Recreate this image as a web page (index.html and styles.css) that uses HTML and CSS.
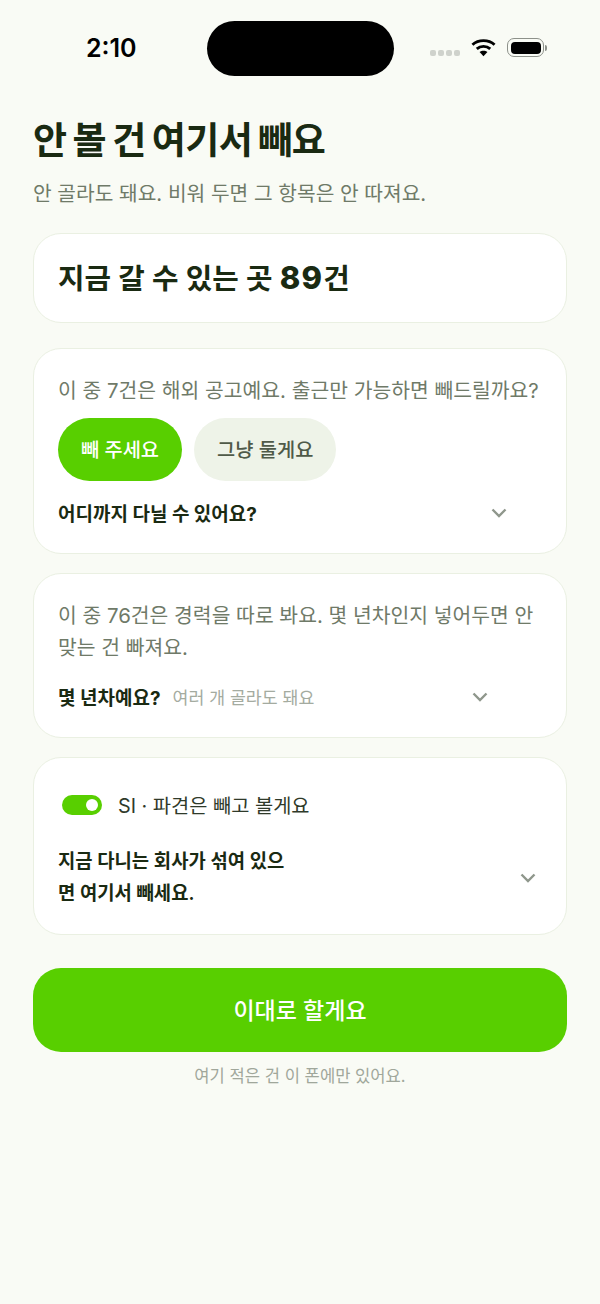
FILE: index.html
```html
<!DOCTYPE html>
<html lang="ko">
<head>
    <meta charset="UTF-8" />
    <meta name="viewport" content="width=device-width, initial-scale=1.0" />
    <title>안 볼 건 여기서 빼요</title>
    <link rel="stylesheet" href="styles.css">
</head>
<body>
    <div class="status-bar">
        <span class="clock">2:10</span>
        <div class="island"></div>
        <div class="status-icons">
            <div class="signal"><i></i><i></i><i></i><i></i></div>
            <svg class="wifi" width="25" height="19" viewBox="0 0 26 19">
                <path d="M1.5 6.6C7.8 .9 18.2 .9 24.5 6.6" fill="none" stroke="#000" stroke-width="3"/>
                <path d="M6 11C10 7.4 16 7.4 20 11" fill="none" stroke="#000" stroke-width="3"/>
                <path d="M13 18.5L8.9 14.3C11.2 12.4 14.8 12.4 17.1 14.3Z" fill="#000"/>
            </svg>
            <div class="battery"><div class="battery-level"></div></div>
            <div class="battery-cap"></div>
        </div>
    </div>

    <main class="page">
        <h1>안 볼 건 여기서 빼요</h1>
        <p class="subtitle">안 골라도 돼요. 비워 두면 그 항목은 안 따져요.</p>

        <section class="card count-card">지금 갈 수 있는 곳 <b>89</b>건</section>

        <section class="card abroad-card">
            <p class="question">이 중 7건은 해외 공고예요. 출근만 가능하면 빼드릴까요?</p>
            <div class="choices">
                <button class="choice choice-on">빼 주세요</button>
                <button class="choice">그냥 둘게요</button>
            </div>
            <div class="select-row abroad-select">
                <span class="select-label">어디까지 다닐 수 있어요?</span>
                <svg class="chevron" width="16" height="10" viewBox="0 0 16 10"><path d="M1.5 1.5L8 8L14.5 1.5" fill="none" stroke="#8f978c" stroke-width="2.4"/></svg>
            </div>
        </section>

        <section class="card career-card">
            <p class="question tall">이 중 76건은 경력을 따로 봐요. 몇 년차인지 넣어두면 안 맞는 건 빠져요.</p>
            <div class="select-row career-select">
                <span class="select-label">몇 년차예요?</span>
                <span class="select-hint">여러 개 골라도 돼요</span>
                <svg class="chevron" width="16" height="10" viewBox="0 0 16 10"><path d="M1.5 1.5L8 8L14.5 1.5" fill="none" stroke="#8f978c" stroke-width="2.4"/></svg>
            </div>
        </section>

        <section class="card company-card">
            <div class="toggle-row">
                <div class="toggle"><div class="knob"></div></div>
                <span>SI · 파견은 빼고 볼게요</span>
            </div>
            <div class="select-row company-select">
                <span class="select-label company-label">지금 다니는 회사가 섞여 있으면 여기서 빼세요.</span>
                <svg class="chevron" width="16" height="10" viewBox="0 0 16 10"><path d="M1.5 1.5L8 8L14.5 1.5" fill="none" stroke="#8f978c" stroke-width="2.4"/></svg>
            </div>
        </section>

        <button class="cta">이대로 할게요</button>
        <p class="note">여기 적은 건 이 폰에만 있어요.</p>
    </main>
</body>
</html>
```

FILE: styles.css
```css
* {
    box-sizing: border-box;
}
body {
    margin: 0;
    background-color: #f9fbf5;
    color: #1a2a12;
    font-family: 'Inter', 'Noto Sans CJK KR', sans-serif;
}
p, h1 {
    margin: 0;
}

/* status bar */
.status-bar {
    display: flex;
    align-items: flex-start;
    height: 76px;
    padding: 21px 0 0 86px;
}
.clock {
    width: 121px;
    margin-top: 12px;
    font-size: 25px;
    line-height: 30px;
    font-weight: 600;
    color: #000;
}
.island {
    width: 187px;
    height: 55px;
    border-radius: 28px;
    background: #000;
}
.status-icons {
    display: flex;
    align-items: center;
    margin: 17px 0 0 36px;
}
.signal {
    display: flex;
    gap: 2px;
    margin-top: 11px;
}
.signal i {
    width: 6px;
    height: 6px;
    border-radius: 2px;
    background: #cfd2cc;
}
.wifi {
    margin-left: 11px;
}
.battery {
    width: 37px;
    height: 19px;
    margin-left: 11px;
    padding: 2.5px;
    border: 1.5px solid #8d918a;
    border-radius: 7px;
}
.battery-level {
    height: 100%;
    border-radius: 4px;
    background: #000;
}
.battery-cap {
    width: 2px;
    height: 6px;
    margin-left: 1px;
    border-radius: 0 2px 2px 0;
    background: #8d918a;
}

/* content */
.page {
    padding: 42px 33px 0;
}
h1 {
    font-size: 37px;
    line-height: 46px;
    font-weight: 700;
    letter-spacing: -0.6px;
    word-spacing: -2px;
}
.subtitle {
    margin-top: 17px;
    font-size: 20.3px;
    line-height: 26px;
    color: #6f7a68;
}
.card {
    background: #fff;
    border: 1.5px solid #eaf0e2;
    border-radius: 28px;
}
.count-card {
    height: 90px;
    margin-top: 26px;
    padding-left: 24px;
    font-size: 28.8px;
    line-height: 87px;
    font-weight: 600;
}
.count-card b {
    font-weight: 800;
    font-size: 31px;
    letter-spacing: 1.2px;
}
.abroad-card {
    height: 206px;
    margin-top: 25px;
    padding: 28px 24px 0;
}
.question {
    font-size: 20.4px;
    line-height: 28px;
    color: #6f7a68;
    white-space: nowrap;
}
.question.tall {
    line-height: 32px;
    white-space: normal;
}
.choices {
    display: flex;
    gap: 12px;
    margin-top: 13px;
}
.choice {
    height: 63px;
    padding: 0 23px 3px;
    border: none;
    border-radius: 32px;
    background: #eef3e8;
    color: #4f5a48;
    font-family: inherit;
    font-size: 19.8px;
    font-weight: 500;
}
.choice-on {
    background: #58cf00;
    color: #fff;
}
.select-row {
    display: flex;
    align-items: center;
}
.select-label {
    font-size: 19px;
    font-weight: 700;
    color: #1a2a12;
}
.select-hint {
    margin-left: 12px;
    font-size: 17.3px;
    color: #a4aba0;
}
.abroad-select {
    justify-content: space-between;
    margin-top: 18px;
    padding-right: 35px;
}
.career-card {
    height: 165px;
    margin-top: 19px;
    padding: 26px 24px 0;
}
.career-select {
    margin-top: 19px;
    padding-right: 54px;
}
.career-select .chevron {
    margin-left: auto;
}
.company-card {
    height: 178px;
    margin-top: 19px;
    padding: 32px 24px 0;
}
.toggle-row {
    display: flex;
    align-items: center;
    gap: 16px;
    padding-left: 4px;
    font-size: 19.8px;
    color: #2f3a2a;
}
.toggle {
    display: flex;
    justify-content: flex-end;
    align-items: center;
    width: 40px;
    height: 20px;
    padding-right: 4px;
    border-radius: 10px;
    background: #58cf00;
}
.knob {
    width: 12px;
    height: 12px;
    border-radius: 50%;
    background: #fff;
}
.company-select {
    justify-content: space-between;
    margin-top: 27px;
    padding-right: 6px;
}
.company-label {
    width: 235px;
    font-size: 18.8px;
    font-weight: 600;
    line-height: 32px;
}
.cta {
    display: block;
    width: 100%;
    height: 84px;
    margin-top: 33px;
    padding-bottom: 3px;
    border: none;
    border-radius: 28px;
    background: #58cf00;
    color: #fff;
    font-family: inherit;
    font-size: 23px;
    font-weight: 500;
}
.note {
    margin-top: 13px;
    font-size: 16.6px;
    line-height: 22px;
    text-align: center;
    color: #a0a79b;
}
```
